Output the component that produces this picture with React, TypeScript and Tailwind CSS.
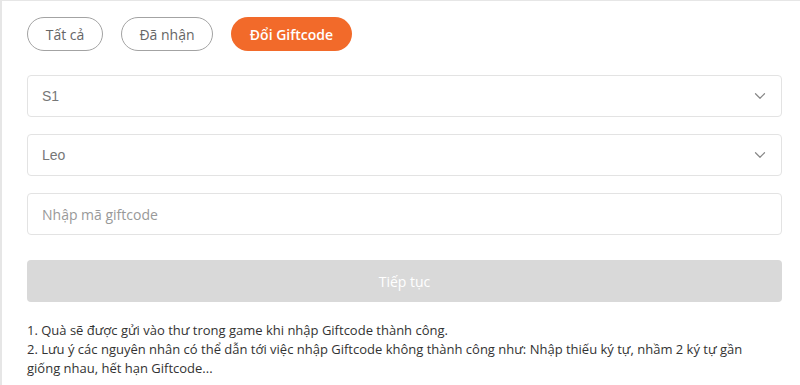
import { ChevronDown } from "lucide-react";

const TABS = [
  { label: "Tất cả", w: "w-[76px]", active: false },
  { label: "Đã nhận", w: "w-[92px]", active: false },
  { label: "Đổi Giftcode", w: "w-[121px]", active: true },
];

function SelectBox({ value }: { value: string }) {
  return (
    <div className="flex h-[42px] items-center justify-between rounded-[4px] border border-[#e3e3e3] bg-white pl-[14px] pr-[12px] font-[Liberation_Sans] text-[14px] text-[#777]">
      <span>{value}</span>
      <ChevronDown size={18} strokeWidth={1.6} className="text-[#888]" />
    </div>
  );
}

export default function App() {
  return (
    <div
      className="h-[385px] w-[800px] overflow-hidden border-l-2 border-t border-[#e6e6e6] bg-white pl-[25px] pr-[18px]"
      style={{ fontFamily: '"Open Sans", "Noto Sans", sans-serif' }}
    >
      {/* tabs */}
      <div className="mt-[16px] flex gap-[18px]">
        {TABS.map((t) => (
          <div
            key={t.label}
            className={`flex h-[34px] items-center justify-center rounded-full text-[14px] ${t.w} ${
              t.active
                ? "bg-[#f26a2a] font-semibold text-white"
                : "border-[1.5px] border-[#a3a3a3] text-[#666]"
            }`}
          >
            {t.label}
          </div>
        ))}
      </div>

      {/* form */}
      <div className="mt-[24px] flex flex-col gap-[17px]">
        <SelectBox value="S1" />
        <SelectBox value="Leo" />
        <div className="flex h-[42px] items-center rounded-[4px] border border-[#e3e3e3] bg-white pl-[14px] text-[14px] text-[#999]">
          Nhập mã giftcode
        </div>
      </div>

      <div className="mt-[25px] flex h-[42px] items-center justify-center rounded-[4px] bg-[#d9d9d9] text-[14px] text-white">
        Tiếp tục
      </div>

      {/* notes */}
      <div className="mt-[19px] pr-[20px] text-[13px] leading-[19px] text-[#333]">
        <p>1. Quà sẽ được gửi vào thư trong game khi nhập Giftcode thành công.</p>
        <p>
          2. Lưu ý các nguyên nhân có thể dẫn tới việc nhập Giftcode không thành công như: Nhập thiếu ký tự, nhầm 2 ký tự gần
          giống nhau, hết hạn Giftcode...
        </p>
      </div>
    </div>
  );
}
